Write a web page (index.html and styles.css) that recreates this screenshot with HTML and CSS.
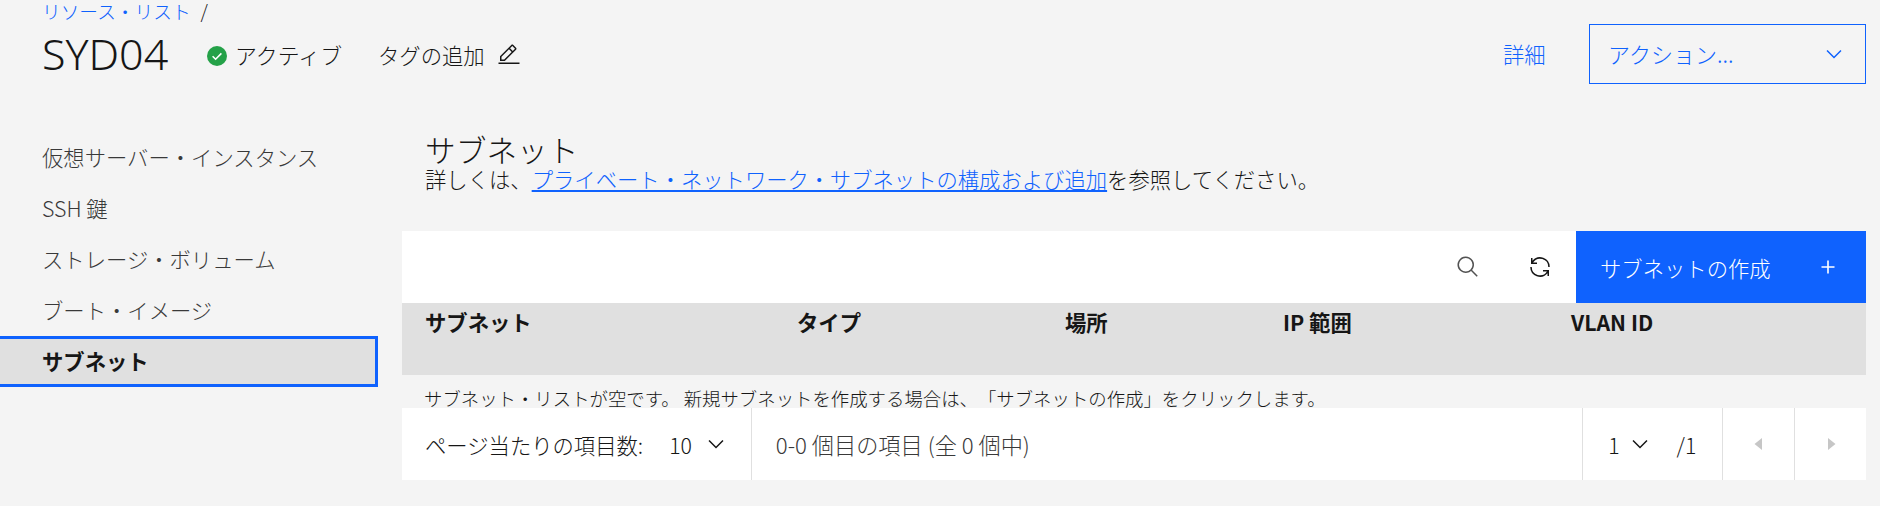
FILE: index.html
```html
<!DOCTYPE html>
<html lang="ja">
<head>
  <meta charset="UTF-8">
  <meta name="viewport" content="width=device-width, initial-scale=1.0">
  <title>SYD04</title>
  <link rel="stylesheet" href="styles.css">
</head>
<body>
  <header class="page-header">
    <div class="breadcrumb"><a href="#">リソース・リスト</a><span class="crumb-sep">/</span></div>
    <div class="title-row">
      <div class="title-left">
        <h1 class="title">SYD04</h1>
        <div class="status">
          <svg class="status-icon" viewBox="0 0 20 20"><circle cx="10" cy="10" r="10" fill="#24a148"/><path d="M5.6 10.2l3 3 5.8-5.8" fill="none" stroke="#fff" stroke-width="1.6"/></svg>
          <span>アクティブ</span>
        </div>
        <div class="add-tag">
          <span>タグの追加</span>
          <svg class="icon-edit" viewBox="0 0 32 32"><path d="M2 26h28v2H2zM25.4 9c.8-.8.8-2 0-2.8l-3.6-3.6c-.8-.8-2-.8-2.8 0l-15 15V24h6.4l15-15zm-5-5L24 7.6l-3 3L17.4 7l3-3zM6 22v-3.6l10-10 3.6 3.6-10 10H6z"/></svg>
        </div>
      </div>
      <div class="title-right">
        <a class="details-link" href="#">詳細</a>
        <div class="actions">
          <span class="actions-label">アクション...</span>
          <svg class="icon-24" viewBox="0 0 32 32"><path d="M16 22 6 12l1.4-1.4 8.6 8.6 8.6-8.6L26 12z"/></svg>
        </div>
      </div>
    </div>
  </header>

  <div class="layout">
    <nav class="side-nav">
      <div class="nav-item">仮想サーバー・インスタンス</div>
      <div class="nav-item">SSH 鍵</div>
      <div class="nav-item">ストレージ・ボリューム</div>
      <div class="nav-item">ブート・イメージ</div>
      <div class="nav-item selected">サブネット</div>
    </nav>

    <main class="content">
      <div class="intro">
        <h2 class="section-title">サブネット</h2>
        <p class="section-desc">詳しくは、<a href="#">プライベート・ネットワーク・サブネットの構成および追加</a>を参照してください。</p>
      </div>

      <div class="toolbar">
        <button class="tool-btn search-btn">
          <svg class="icon-search" viewBox="0 0 32 32"><path d="M29 27.5859l-7.5521-7.5521a11.0177 11.0177 0 1 0-1.4141 1.4141L27.5859 29ZM4 13a9 9 0 1 1 9 9A9.01 9.01 0 0 1 4 13Z"/></svg>
        </button>
        <button class="tool-btn">
          <svg class="icon-renew" viewBox="0 0 32 32"><path d="M12 10H6.78A11 11 0 0 1 27 16h2A13 13 0 0 0 6 7.68V4H4v8h8zM20 22h5.22A11 11 0 0 1 5 16H3a13 13 0 0 0 23 8.32V28h2v-8h-8z"/></svg>
        </button>
        <button class="create-btn">
          <span>サブネットの作成</span>
          <svg class="icon-add" viewBox="0 0 32 32"><path d="M17 15V8h-2v7H8v2h7v7h2v-7h7v-2h-7z"/></svg>
        </button>
      </div>

      <div class="table-head">
        <div>サブネット</div>
        <div>タイプ</div>
        <div>場所</div>
        <div>IP 範囲</div>
        <div>VLAN ID</div>
      </div>

      <div class="empty-msg">サブネット・リストが空です。 新規サブネットを作成する場合は、「サブネットの作成」をクリックします。</div>

      <div class="pagination">
        <div class="page-size">
          <span>ページ当たりの項目数:</span>
          <span class="page-size-val">10</span>
          <svg class="icon-24" viewBox="0 0 32 32"><path d="M16 22 6 12l1.4-1.4 8.6 8.6 8.6-8.6L26 12z"/></svg>
        </div>
        <div class="page-range">0-0 個目の項目 (全 0 個中)</div>
        <div class="page-num">
          <span>1</span>
          <svg class="icon-24" viewBox="0 0 32 32"><path d="M16 22 6 12l1.4-1.4 8.6 8.6 8.6-8.6L26 12z"/></svg>
          <span class="page-total">/1</span>
        </div>
        <div class="page-arrow">
          <svg class="icon-caret" viewBox="0 0 32 32"><path d="M20 24l-10-8 10-8z"/></svg>
        </div>
        <div class="page-arrow last">
          <svg class="icon-caret" viewBox="0 0 32 32"><path d="M12 8l10 8-10 8z"/></svg>
        </div>
      </div>
    </main>
  </div>
</body>
</html>
```

FILE: styles.css
```css
* {
  box-sizing: border-box;
}
body {
  margin: 0;
  height: 506px;
  overflow: hidden;
  background: #f4f4f4;
  color: #161616;
  font-family: "Noto Sans CJK JP", "Noto Sans", sans-serif;
  font-weight: 300;
  font-size: 21.33px;
  text-spacing-trim: space-all;
}
a {
  color: #0f62fe;
}
svg {
  display: block;
  flex: none;
  fill: currentColor;
}
.page-header {
  padding: 0 14px 0 42px;
  height: 132px;
}
.breadcrumb {
  height: 24px;
  line-height: 22px;
  font-size: 18.7px;
}
.breadcrumb a {
  text-decoration: none;
}
.crumb-sep {
  margin-left: 10px;
}
.title-row {
  display: flex;
  justify-content: space-between;
}
.title-left {
  display: flex;
  align-items: center;
  height: 60px;
}
.title {
  margin: 0 37px 0 0;
  font-family: "Noto Sans", sans-serif;
  font-size: 43px;
  font-weight: 300;
  line-height: 60px;
  width: 128px;
  white-space: nowrap;
}
.status {
  display: flex;
  align-items: center;
  gap: 8px;
  width: 171px;
  font-size: 21.9px;
}
.status-icon {
  width: 20px;
  height: 20px;
  margin-top: 3px;
}
.add-tag {
  display: flex;
  align-items: center;
  gap: 12px;
}
.icon-edit {
  width: 24px;
  height: 24px;
  margin-top: 2px;
}
.title-right {
  display: flex;
  align-items: center;
  height: 60px;
}
.details-link {
  width: 86px;
  text-decoration: none;
  margin-bottom: 1px;
}
.actions {
  display: flex;
  justify-content: space-between;
  align-items: center;
  width: 277px;
  height: 60px;
  padding: 0 19px 0 18px;
  border: 1px solid #0f62fe;
  color: #0f62fe;
  font-size: 22px;
}
.actions-label {
  margin-bottom: 3px;
}
.icon-24 {
  width: 24px;
  height: 24px;
}
.layout {
  display: flex;
}
.side-nav {
  width: 378px;
  margin-right: 24px;
  flex: none;
}
.nav-item {
  height: 51px;
  line-height: 49px;
  padding-left: 42px;
  color: #393939;
}
.nav-item.selected {
  background: #e0e0e0;
  border: 3px solid #0f62fe;
  border-left: none;
  line-height: 43px;
  color: #161616;
  font-weight: 700;
}
.content {
  width: 1464px;
}
.intro {
  height: 99px;
  padding-left: 23px;
}
.section-title {
  margin: 0;
  font-size: 30.7px;
  font-weight: 300;
  line-height: 34px;
}
.section-desc {
  margin: 0;
  line-height: 26px;
}
.toolbar {
  display: flex;
  justify-content: flex-end;
  height: 72px;
  background: #fff;
}
.tool-btn {
  display: flex;
  justify-content: center;
  align-items: center;
  width: 72px;
  background: none;
  border: none;
  padding: 0;
  color: #161616;
}
.search-btn {
  color: #525252;
}
.icon-search {
  width: 24px;
  height: 24px;
}
.icon-renew {
  width: 24px;
  height: 24px;
}
.create-btn {
  display: flex;
  justify-content: space-between;
  align-items: center;
  width: 290px;
  padding: 0 24px;
  background: #0f62fe;
  border: none;
  font: inherit;
  color: #fff;
}
.icon-add {
  width: 26px;
  height: 26px;
  margin-right: 1px;
}
.table-head {
  display: grid;
  grid-template-columns: 372px 268px 218px 288px 1fr;
  height: 72px;
  padding: 3px 0 0 23px;
  background: #e0e0e0;
  font-weight: 700;
  line-height: 32px;
}
.empty-msg {
  height: 33px;
  overflow: hidden;
  padding: 11px 0 0 22px;
  font-size: 18.4px;
  line-height: 24px;
}
.pagination {
  display: flex;
  align-items: stretch;
  height: 72px;
  background: #fff;
}
.page-size {
  display: flex;
  align-items: center;
  width: 350px;
  padding-left: 23px;
  border-right: 1px solid #e0e0e0;
}
.page-size-val {
  margin-left: 26px;
  margin-right: 12px;
}
.page-range {
  display: flex;
  align-items: center;
  width: 831px;
  padding-left: 24px;
  color: #393939;
  font-size: 22.2px;
}
.page-num {
  display: flex;
  align-items: center;
  width: 140px;
  padding-left: 25px;
  border-left: 1px solid #e0e0e0;
}
.page-num .icon-24 {
  margin-left: 8px;
}
.page-total {
  margin-left: 25px;
}
.page-arrow {
  display: flex;
  justify-content: center;
  align-items: center;
  width: 72px;
  border-left: 1px solid #e0e0e0;
  color: #c6c6c6;
}
.icon-caret {
  width: 24px;
  height: 24px;
}
```
